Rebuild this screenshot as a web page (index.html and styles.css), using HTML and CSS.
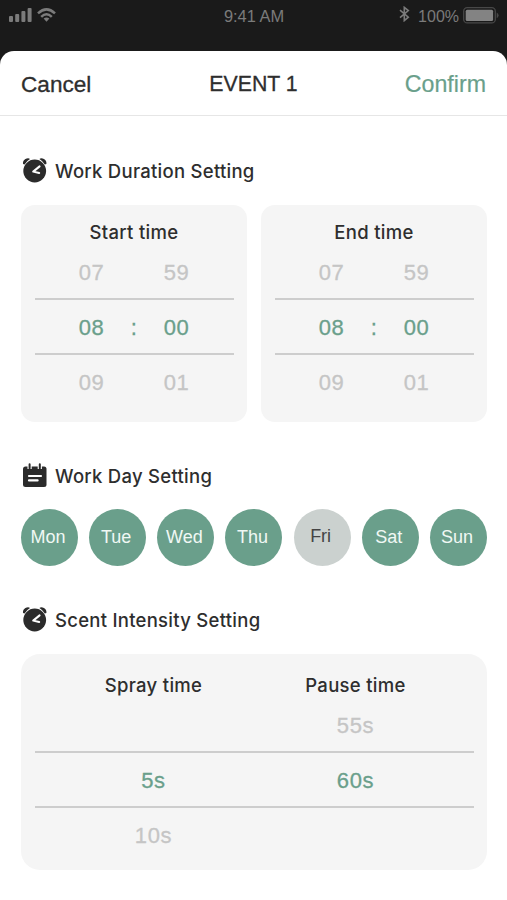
FILE: index.html
```html
<!DOCTYPE html>
<html lang="en">
<head>
<meta charset="utf-8">
<title>Event 1</title>
<link rel="stylesheet" href="styles.css">
</head>
<body>
<svg class="defs" width="0" height="0">
  <symbol id="alarm" viewBox="0 0 26 26">
    <path d="M1 7.1Q.6 3.6 3.4 2.1T8 2Q4.6 4 2.6 7.4ZM24.4 7.1Q24.8 3.6 22 2.1T17.4 2Q20.8 4 22.8 7.4Z" fill="#2b2b2b"/>
    <circle cx="12.7" cy="14" r="11.4" fill="#2b2b2b"/>
    <path d="M17.6 9.4L11.2 14.6L17.2 16" fill="none" stroke="#fff" stroke-width="2" stroke-linecap="round" stroke-linejoin="round"/>
  </symbol>
</svg>
<div class="status">
  <div class="signals">
    <svg width="23" height="14" viewBox="0 0 23 14" fill="#7b7b7b"><rect x="0" y="8" width="4" height="6" rx="1"/><rect x="6.2" y="6" width="4" height="8" rx="1"/><rect x="12.4" y="3" width="4" height="11" rx="1"/><rect x="18.6" y="0" width="4" height="14" rx="1"/></svg>
    <svg width="19" height="14" viewBox="0 0 19 14" fill="none" stroke="#7b7b7b" stroke-width="2.5"><path d="M1 5.4Q9.5-2.6 18 5.4M4.2 8.8Q9.5 3.8 14.8 8.8"/><path d="M6.6 10.6Q9.5 8.2 12.4 10.6L9.5 13.7Z" fill="#7b7b7b" stroke="none"/></svg>
  </div>
  <span class="clock">9:41 AM</span>
  <div class="power">
    <svg width="11" height="16" viewBox="0 0 11 16" fill="none" stroke="#7b7b7b" stroke-width="1.6"><path d="M1 4.2L9.3 11.2L5.3 14.6V1.4L9.3 4.6L1 11.6"/></svg>
    <span>100%</span>
    <svg class="battery" width="36" height="17" viewBox="0 0 36 17"><rect x=".7" y=".7" width="31.6" height="15.2" rx="3.5" fill="none" stroke="#484848" stroke-width="1.3"/><rect x="2.7" y="2.7" width="27.4" height="11.2" rx="1.5" fill="#838383"/><path d="M33.7 5.4Q35.6 6.5 35.6 8.3T33.7 11.2Z" fill="#484848"/></svg>
  </div>
</div>
<main class="sheet">
  <header class="bar"><span class="cancel">Cancel</span><h1>EVENT 1</h1><span class="confirm">Confirm</span></header>

  <h2 class="heading first"><svg width="26" height="26"><use href="#alarm"/></svg><span>Work Duration Setting</span></h2>
  <div class="cards">
    <section class="card">
      <h3>Start time</h3>
      <div class="row"><span>07</span><i></i><span>59</span></div>
      <div class="row active"><span>08</span><i>:</i><span>00</span></div>
      <div class="row"><span>09</span><i></i><span>01</span></div>
    </section>
    <section class="card">
      <h3>End time</h3>
      <div class="row"><span>07</span><i></i><span>59</span></div>
      <div class="row active"><span>08</span><i>:</i><span>00</span></div>
      <div class="row"><span>09</span><i></i><span>01</span></div>
    </section>
  </div>

  <h2 class="heading second"><svg width="26" height="26" viewBox="0 0 26 26"><rect x="1" y="3.5" width="23.5" height="20.5" rx="2.5" fill="#2b2b2b"/><path d="M7.6 1V6M17.8 1V6" stroke="#fff" stroke-width="4.2"/><path d="M7.6 1.2V5.6M17.8 1.2V5.6" stroke="#2b2b2b" stroke-width="2" stroke-linecap="round"/><path d="M7 13H19M7 17.4H15.6" stroke="#fff" stroke-width="2.2" stroke-linecap="round"/></svg><span>Work Day Setting</span></h2>
  <div class="days"><span>Mon</span><span>Tue</span><span>Wed</span><span>Thu</span><span class="off">Fri</span><span>Sat</span><span>Sun</span></div>

  <h2 class="heading third"><svg width="26" height="26"><use href="#alarm"/></svg><span>Scent Intensity Setting</span></h2>
  <section class="card wide">
    <div class="titles"><h3>Spray time</h3><h3>Pause time</h3></div>
    <div class="row"><span></span><span>55s</span></div>
    <div class="row active"><span>5s</span><span>60s</span></div>
    <div class="row"><span>10s</span><span></span></div>
  </section>
</main>
</body>
</html>
```
FILE: styles.css
```css
* { box-sizing: border-box; }
body { margin: 0; width: 507px; height: 900px; overflow: hidden; background: #1a1a1a; color: #2e2e2e; font-family: "Liberation Sans", Arial, sans-serif; }
h1, h2, h3 { margin: 0; font-weight: 500; }
svg { display: block; flex: none; }
.defs { position: absolute; }
.status { height: 51px; padding: 7px 8px 0 9px; display: grid; grid-template-columns: 1fr auto 1fr; align-items: start; color: #7b7b7b; font-size: 16px; line-height: 19px; }
.signals { display: flex; gap: 5px; padding-top: 1px; }
.clock { font-size: 16.4px; }
.power { display: flex; justify-content: flex-end; }
.power svg:first-child { margin: -1px 8px 0 0; }
.power .battery { margin: 0 0 0 4px; }
.sheet { height: 849px; background: #fff; border-radius: 14px 14px 0 0; }
.bar { height: 65px; padding: 3px 21px 0; border-bottom: 1px solid #e6e6e6; display: grid; grid-template-columns: 1fr auto 1fr; align-items: center; font-size: 22.6px; }
.bar h1 { font-size: 21.3px; -webkit-text-stroke: .3px; }
.cancel { -webkit-text-stroke: .3px; }
.confirm { color: #6a9f8b; text-align: right; font-size: 23.2px; -webkit-text-stroke: .2px; }
.heading { display: flex; align-items: center; gap: 7px; height: 26px; padding-left: 22px; font: 500 18.5px/26px Inter, sans-serif; letter-spacing: .27px; }
.heading span { padding-top: 2px; }
.first { margin-top: 41px; }
.second { margin-top: 41px; }
.second span { padding-top: 0; }
.third { margin-top: 40px; }
.cards { display: flex; gap: 14px; padding: 0 20px 0 21px; margin-top: 22px; }
.card { flex: 1; height: 216.5px; padding: 13px 13.5px 0; border-radius: 14px; background: #f5f5f5; }
.card h3 { height: 28px; text-align: center; font: 500 18.5px/28px Inter, sans-serif; letter-spacing: .3px; }
.row { height: 52px; padding-top: 2px; display: grid; grid-template-columns: 72px 13px 72px; justify-content: center; align-items: center; text-align: center; color: #c5c5c5; font-size: 22px; letter-spacing: .6px; -webkit-text-stroke: .3px; }
.row i { font-style: normal; }
.active { height: 57px; border: solid #cdcdcd; border-width: 2px 0; color: #6a9f8b; }
.row:last-child { height: 53px; }
.days { display: flex; justify-content: space-between; padding: 0 20px 0 21px; margin-top: 20px; }
.days span { width: 57px; height: 57px; border-radius: 50%; background: #6a9f8b; color: #f0f8f4; text-align: center; font-size: 18px; line-height: 57px; padding-right: 3px; }
.days .off { background: #cbd1cf; color: #444; line-height: 55px; }
.wide { margin: 22px 20px 0 21px; border-radius: 19px; padding-top: 17.5px; }
.titles, .wide .row { display: grid; grid-template-columns: 202px 202px; justify-content: start; padding-left: 18px; }
```
